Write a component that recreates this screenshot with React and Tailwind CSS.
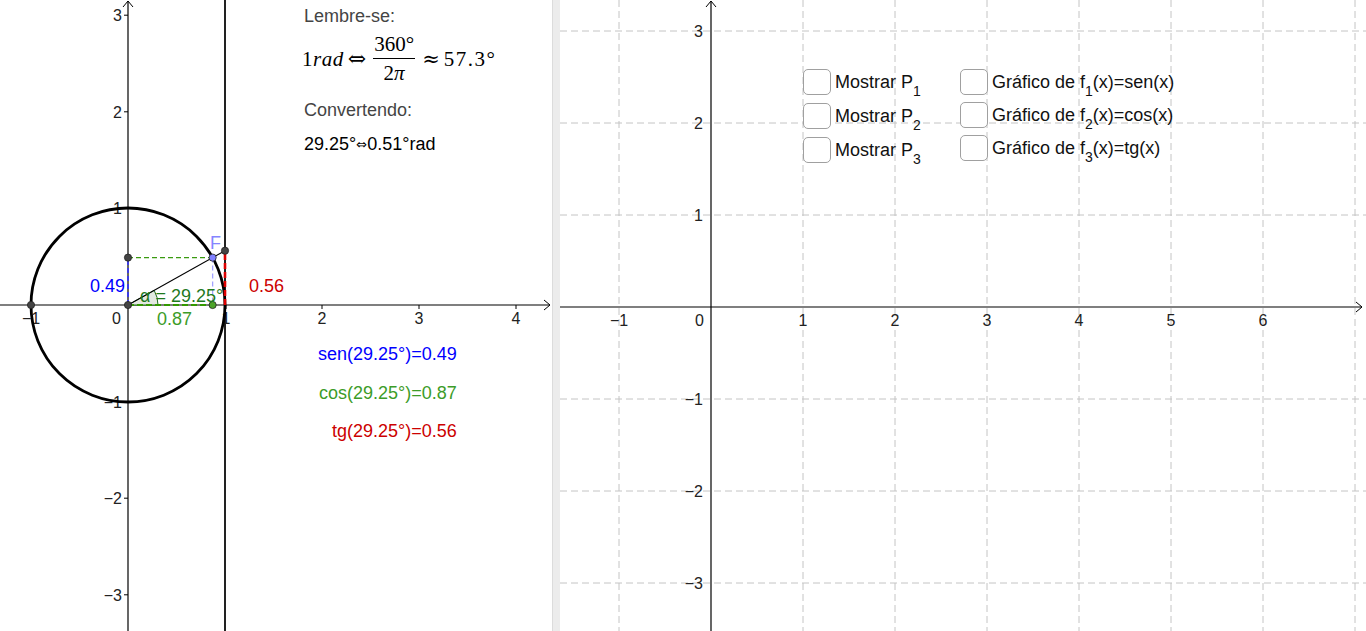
import React from 'react';

const O = { x: 128, y: 305 };
const S = 97;
const DEG = 29.25;
const rad = (DEG * Math.PI) / 180;
const cx = O.x + S * Math.cos(rad);
const sy = O.y - S * Math.sin(rad);
const ty = O.y - S * Math.tan(rad);

const leftYTicks = [
  { v: '3', y: 15.2 },
  { v: '2', y: 111.8 },
  { v: '1', y: 208.4 },
  { v: '−1', y: 401.6 },
  { v: '−2', y: 498.2 },
  { v: '−3', y: 594.8 },
];
const leftXTicks = [
  { v: '−1', x: 31 },
  { v: '1', x: 226 },
  { v: '2', x: 322 },
  { v: '3', x: 419 },
  { v: '4', x: 516 },
];

const rightGridX = [59, 243, 335, 427, 519, 611, 703, 795];
const rightGridY = [31, 123, 215, 399, 491, 583];
const rightXLabels = [
  { v: '−1', x: 59 },
  { v: '1', x: 243 },
  { v: '2', x: 335 },
  { v: '3', x: 427 },
  { v: '4', x: 519 },
  { v: '5', x: 611 },
  { v: '6', x: 703 },
];
const rightYLabels = [
  { v: '3', y: 31 },
  { v: '2', y: 123 },
  { v: '1', y: 215 },
  { v: '−1', y: 399 },
  { v: '−2', y: 491 },
  { v: '−3', y: 583 },
];

function Point({ x, y, fill = '#444' }) {
  return <circle cx={x} cy={y} r="3.6" fill={fill} stroke="#222" strokeWidth="0.8" />;
}

function LeftGraph() {
  const ax = O.x + 30 * Math.cos(rad);
  const ay = O.y - 30 * Math.sin(rad);
  return (
    <svg className="absolute inset-0" width="552" height="631" style={{ fontFamily: "'Liberation Sans', Arial, sans-serif" }}>
      {/* axes */}
      <line x1="0" y1={O.y} x2="550" y2={O.y} stroke="#000" strokeWidth="1.2" />
      <polyline points="544,300 550,305 544,310" fill="none" stroke="#000" strokeWidth="1" />
      <line x1={O.x} y1="631" x2={O.x} y2="1" stroke="#000" strokeWidth="1.2" />
      <polyline points="123,7 128,1 133,7" fill="none" stroke="#000" strokeWidth="1" />
      {leftYTicks.map((t) => (
        <line key={t.v} x1="124" y1={t.y} x2={O.x} y2={t.y} stroke="#000" strokeWidth="1" />
      ))}
      {leftXTicks.map((t) => (
        <line key={t.v} x1={t.x} y1={O.y} x2={t.x} y2={O.y + 4} stroke="#000" strokeWidth="1" />
      ))}
      {leftYTicks.map((t) => (
        <text key={t.v} x="122" y={t.y + 6} textAnchor="end" fontSize="16" fill="#222">{t.v}</text>
      ))}
      {leftXTicks.map((t) => (
        <text key={t.v} x={t.x} y="324" textAnchor="middle" fontSize="16" fill="#222">{t.v}</text>
      ))}
      <text x="121" y="324" textAnchor="end" fontSize="16" fill="#222">0</text>

      {/* tangent line */}
      <line x1="225" y1="0" x2="225" y2="631" stroke="#222" strokeWidth="2" />

      {/* unit circle */}
      <circle cx={O.x} cy={O.y} r={S} fill="none" stroke="#000" strokeWidth="2.8" />

      {/* angle */}
      <path d={`M${O.x},${O.y} L${O.x + 30},${O.y} A30,30 0 0 0 ${ax},${ay} Z`} fill="#e4e9e1" stroke="#1e6b1e" strokeWidth="1" />

      {/* segments */}
      <line x1={O.x} y1={O.y} x2="225" y2={ty} stroke="#000" strokeWidth="1.1" />
      <line x1={O.x} y1={sy} x2={cx} y2={sy} stroke="#3a9a10" strokeWidth="1.4" strokeDasharray="5 3" />
      <line x1={O.x} y1={O.y} x2={O.x} y2={sy} stroke="#3333ff" strokeWidth="1.6" strokeDasharray="5 3" />
      <line x1={cx} y1={sy} x2={cx} y2={O.y} stroke="#a3a3ff" strokeWidth="1.3" strokeDasharray="5 3" />
      <line x1={O.x} y1={O.y} x2={cx} y2={O.y} stroke="#339900" strokeWidth="2.2" strokeDasharray="6 3" />
      <line x1="225" y1={O.y} x2="225" y2={ty} stroke="#dd0000" strokeWidth="2.6" strokeDasharray="6 3" />

      {/* points */}
      <Point x={31} y={O.y} />
      <Point x={O.x} y={O.y} />
      <Point x={O.x} y={sy} />
      <Point x={225} y={ty} />
      <Point x={cx} y={O.y} fill="#4ca32a" />
      <Point x={cx} y={sy} fill="#8080ff" />

      {/* labels */}
      <text x="210" y="249" fontSize="18" fill="#8585ff">F</text>
      <text x="90" y="292" fontSize="18" fill="#0000ff">0.49</text>
      <text x="140" y="302" fontSize="18" fill="#1f7a1f">α = 29.25°</text>
      <text x="157" y="325" fontSize="18" fill="#3c9c28">0.87</text>
      <text x="249" y="292" fontSize="18" fill="#cc0000">0.56</text>
    </svg>
  );
}

function RightGraph() {
  return (
    <svg className="absolute inset-0" width="806" height="631" style={{ fontFamily: "'Liberation Sans', Arial, sans-serif" }}>
      {rightGridX.map((x) => (
        <line key={x} x1={x} y1="0" x2={x} y2="631" stroke="#c4c4c4" strokeWidth="1" strokeDasharray="7 4" />
      ))}
      {rightGridY.map((y) => (
        <line key={y} x1="0" y1={y} x2="806" y2={y} stroke="#c4c4c4" strokeWidth="1" strokeDasharray="7 4" />
      ))}
      <line x1="0" y1="307" x2="802" y2="307" stroke="#000" strokeWidth="1.2" />
      <polyline points="796,302 802,307 796,312" fill="none" stroke="#000" strokeWidth="1" />
      <line x1="151" y1="631" x2="151" y2="1" stroke="#000" strokeWidth="1.2" />
      <polyline points="146,7 151,1 156,7" fill="none" stroke="#000" strokeWidth="1" />
      {rightXLabels.map((t) => (
        <text key={t.v} x={t.x} y="326" textAnchor="middle" fontSize="16" fill="#222">{t.v}</text>
      ))}
      <text x="144" y="326" textAnchor="end" fontSize="16" fill="#222">0</text>
      {rightYLabels.map((t) => (
        <text key={t.v} x="143" y={t.y + 6} textAnchor="end" fontSize="16" fill="#222">{t.v}</text>
      ))}
    </svg>
  );
}

function Check({ children }) {
  return (
    <div className="flex items-center h-[27px] gap-[4px]">
      <div className="w-[28px] h-[26px] rounded-[5px] border-[1.5px] border-[#a0a0a0] bg-white" />
      <span className="text-[18px] leading-none text-[#111] whitespace-nowrap">{children}</span>
    </div>
  );
}

function Sub({ children }) {
  return <span className="relative top-[8px] text-[14px]">{children}</span>;
}

export default function App() {
  return (
    <div className="w-full h-[631px] flex overflow-hidden bg-white font-['Liberation_Sans',Arial,sans-serif]">
      <div className="relative w-[552px] h-full shrink-0">
        <LeftGraph />
        <div className="absolute left-[304px] top-[7px] text-[18px] leading-none text-[#444]">Lembre-se:</div>
        <div className="absolute left-[302px] top-[35px] h-[48px] flex items-center gap-[4px] text-[21px] leading-none text-black font-['Liberation_Serif','DejaVu_Serif',serif]">
          <span className="tracking-[0.5px]">1<i>rad</i></span>
          <span className="font-['DejaVu_Serif',serif] text-[22px]">⇔</span>
          <span className="flex flex-col items-center px-[3px]">
            <span className="pb-[3px]">360°</span>
            <span className="w-[42px] h-px bg-black" />
            <span className="pt-[4px]">2<i>π</i></span>
          </span>
          <span className="font-['DejaVu_Serif',serif] text-[21px]">≈</span>
          <span className="tracking-[1.5px]">57.3°</span>
        </div>
        <div className="absolute left-[304px] top-[101px] text-[18px] leading-none text-[#444]">Convertendo:</div>
        <div className="absolute left-[304px] top-[135px] text-[18px] leading-none text-black">
          29.25°<span className="font-['DejaVu_Sans',sans-serif] text-[13px] relative -top-[1px]">⇔</span>0.51°rad
        </div>
        <div className="absolute left-[318px] top-[345px] text-[18px] leading-none text-[#0000ff]">sen(29.25°)=0.49</div>
        <div className="absolute left-[319px] top-[384px] text-[18px] leading-none text-[#3c9c28]">cos(29.25°)=0.87</div>
        <div className="absolute left-[332px] top-[422px] text-[18px] leading-none text-[#cc0000]">tg(29.25°)=0.56</div>
      </div>
      <div className="w-[8px] h-full shrink-0 bg-[#ececec] border-l border-[#dcdcdc]" />
      <div className="relative flex-1 h-full">
        <RightGraph />
        <div className="absolute left-[243px] top-[68px] flex">
          <div className="flex flex-col gap-[7px] w-[157px]">
            <Check>Mostrar P<Sub>1</Sub></Check>
            <Check>Mostrar P<Sub>2</Sub></Check>
            <Check>Mostrar P<Sub>3</Sub></Check>
          </div>
          <div className="flex flex-col gap-[6px]">
            <Check>Gráfico de f<Sub>1</Sub>(x)=sen(x)</Check>
            <Check>Gráfico de f<Sub>2</Sub>(x)=cos(x)</Check>
            <Check>Gráfico de f<Sub>3</Sub>(x)=tg(x)</Check>
          </div>
        </div>
      </div>
    </div>
  );
}
